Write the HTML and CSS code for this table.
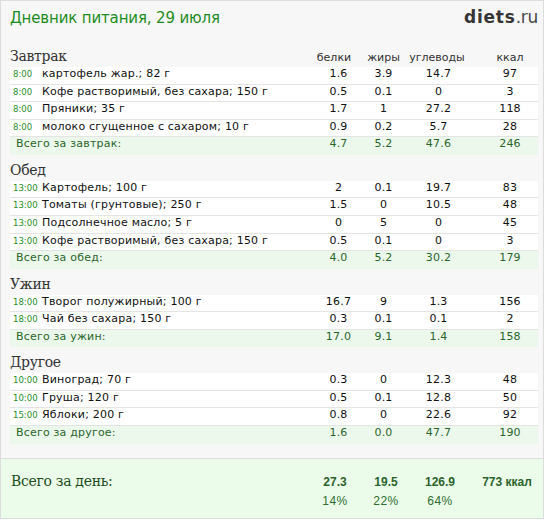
FILE: index.html
```html
<!DOCTYPE html>
<html lang="ru">
<head>
<meta charset="utf-8">
<title>Дневник питания</title>
<link rel="stylesheet" href="styles.css">
</head>
<body>
<div class="diary">
  <header class="diary-head">
    <h1 class="diary-title">Дневник питания, 29 июля</h1>
    <div class="logo"><span class="logo-name">diets</span><span class="logo-tld">.ru</span></div>
  </header>

  <section class="meal">
    <div class="meal-head">
      <h2 class="meal-name">Завтрак</h2>
      <span class="col-h col-b">белки</span>
      <span class="col-h col-z">жиры</span>
      <span class="col-h col-u">углеводы</span>
      <span class="col-h col-k">ккал</span>
    </div>
    <div class="row"><span class="name"><span class="time">8:00</span>картофель жар.; 82 г</span><span class="num">1.6</span><span class="num">3.9</span><span class="num">14.7</span><span class="num num-k">97</span></div>
    <div class="row"><span class="name"><span class="time">8:00</span>Кофе растворимый, без сахара; 150 г</span><span class="num">0.5</span><span class="num">0.1</span><span class="num">0</span><span class="num num-k">3</span></div>
    <div class="row"><span class="name"><span class="time">8:00</span>Пряники; 35 г</span><span class="num">1.7</span><span class="num">1</span><span class="num">27.2</span><span class="num num-k">118</span></div>
    <div class="row"><span class="name"><span class="time">8:00</span>молоко сгущенное с сахаром; 10 г</span><span class="num">0.9</span><span class="num">0.2</span><span class="num">5.7</span><span class="num num-k">28</span></div>
    <div class="row total"><span class="name">Всего за завтрак:</span><span class="num">4.7</span><span class="num">5.2</span><span class="num">47.6</span><span class="num num-k">246</span></div>
  </section>

  <section class="meal">
    <div class="meal-head"><h2 class="meal-name">Обед</h2></div>
    <div class="row"><span class="name"><span class="time">13:00</span>Картофель; 100 г</span><span class="num">2</span><span class="num">0.1</span><span class="num">19.7</span><span class="num num-k">83</span></div>
    <div class="row"><span class="name"><span class="time">13:00</span>Томаты (грунтовые); 250 г</span><span class="num">1.5</span><span class="num">0</span><span class="num">10.5</span><span class="num num-k">48</span></div>
    <div class="row"><span class="name"><span class="time">13:00</span>Подсолнечное масло; 5 г</span><span class="num">0</span><span class="num">5</span><span class="num">0</span><span class="num num-k">45</span></div>
    <div class="row"><span class="name"><span class="time">13:00</span>Кофе растворимый, без сахара; 150 г</span><span class="num">0.5</span><span class="num">0.1</span><span class="num">0</span><span class="num num-k">3</span></div>
    <div class="row total"><span class="name">Всего за обед:</span><span class="num">4.0</span><span class="num">5.2</span><span class="num">30.2</span><span class="num num-k">179</span></div>
  </section>

  <section class="meal">
    <div class="meal-head"><h2 class="meal-name">Ужин</h2></div>
    <div class="row"><span class="name"><span class="time">18:00</span>Творог полужирный; 100 г</span><span class="num">16.7</span><span class="num">9</span><span class="num">1.3</span><span class="num num-k">156</span></div>
    <div class="row"><span class="name"><span class="time">18:00</span>Чай без сахара; 150 г</span><span class="num">0.3</span><span class="num">0.1</span><span class="num">0.1</span><span class="num num-k">2</span></div>
    <div class="row total"><span class="name">Всего за ужин:</span><span class="num">17.0</span><span class="num">9.1</span><span class="num">1.4</span><span class="num num-k">158</span></div>
  </section>

  <section class="meal">
    <div class="meal-head"><h2 class="meal-name">Другое</h2></div>
    <div class="row"><span class="name"><span class="time">10:00</span>Виноград; 70 г</span><span class="num">0.3</span><span class="num">0</span><span class="num">12.3</span><span class="num num-k">48</span></div>
    <div class="row"><span class="name"><span class="time">10:00</span>Груша; 120 г</span><span class="num">0.5</span><span class="num">0.1</span><span class="num">12.8</span><span class="num num-k">50</span></div>
    <div class="row"><span class="name"><span class="time">15:00</span>Яблоки; 200 г</span><span class="num">0.8</span><span class="num">0</span><span class="num">22.6</span><span class="num num-k">92</span></div>
    <div class="row total"><span class="name">Всего за другое:</span><span class="num">1.6</span><span class="num">0.0</span><span class="num">47.7</span><span class="num num-k">190</span></div>
  </section>

  <div class="day">
    <span class="day-label">Всего за день:</span>
    <span class="day-val day-b">27.3</span>
    <span class="day-val day-z">19.5</span>
    <span class="day-val day-u">126.9</span>
    <span class="day-val day-k">773 ккал</span>
    <span class="day-pct day-b">14%</span>
    <span class="day-pct day-z">22%</span>
    <span class="day-pct day-u">64%</span>
  </div>
</div>
</body>
</html>
```

FILE: styles.css
```css
html, body {
  margin: 0;
  padding: 0;
  background: #ffffff;
}

.diary {
  box-sizing: border-box;
  width: 544px;
  height: 519px;
  border: 1px solid #dcdcdc;
  background: #f7f7f7;
  display: flex;
  flex-direction: column;
  font-family: "DejaVu Sans", Verdana, sans-serif;
  font-size: 11px;
  color: #111;
}

.diary-head {
  box-sizing: border-box;
  height: 40px;
  flex: none;
  padding: 7px 5px 0 9px;
  display: flex;
  justify-content: space-between;
  align-items: baseline;
}

.diary-title {
  margin: 0;
  font-family: "DejaVu Sans", Verdana, sans-serif;
  font-weight: normal;
  font-size: 15px;
  line-height: 18px;
  letter-spacing: -0.15px;
  color: #1e8c1e;
}

.logo {
  font-family: "DejaVu Sans", sans-serif;
  font-size: 17px;
  line-height: 18px;
  color: #353535;
}

.logo-name {
  font-weight: bold;
  letter-spacing: 0.8px;
}

.logo-tld {
  font-weight: normal;
  color: #4a4a4a;
  letter-spacing: -0.3px;
}

.meal {
  padding: 0 5px 0 9px;
}

.meal-head,
.row {
  display: grid;
  grid-template-columns: 305px 47px 43px 67px 65px;
}

.meal-head {
  box-sizing: border-box;
  height: 26px;
  padding: 7px 0 2px;
  align-items: baseline;
}

.meal-name {
  margin: 0;
  font-family: "DejaVu Serif", Georgia, serif;
  font-weight: normal;
  font-size: 14px;
  line-height: 17px;
  letter-spacing: -0.3px;
  color: #333;
}

.col-h {
  text-align: center;
  color: #333;
  line-height: 17px;
}

.col-b { padding-right: 9px; }
.col-u { padding-right: 3px; }
.col-k { padding-left: 11px; }

.row {
  line-height: 14.56px;
  padding-bottom: 2px;
  background: #ffffff;
  border-bottom: 1px solid #e4e4e4;
  letter-spacing: 0.2px;
}

.name {
  white-space: nowrap;
}

.time {
  display: inline-block;
  box-sizing: border-box;
  width: 32px;
  padding-left: 3px;
  font-family: "DejaVu Sans Condensed", "DejaVu Sans", sans-serif;
  font-stretch: condensed;
  font-size: 9.5px;
  letter-spacing: 0;
  color: #1f8f1f;
}

.num {
  text-align: center;
}

.num-k {
  padding-left: 11px;
}

.row.total {
  background: #edf8ed;
  border-bottom: none;
  padding-bottom: 3px;
  color: #2a662a;
}

.row.total .name {
  padding-left: 6px;
}

.day {
  box-sizing: border-box;
  height: 60px;
  flex: none;
  margin-top: auto;
  border-top: 1px solid #dcdcdc;
  background: #ebfceb;
  padding: 13px 5px 0 9px;
  display: grid;
  grid-template-columns: 305px 47px 43px 67px 65px;
  grid-template-rows: 18px 18px;
  row-gap: 2px;
  align-items: baseline;
}

.day-label {
  grid-row: 1;
  grid-column: 1;
  padding-left: 1px;
  font-family: "DejaVu Serif", Georgia, serif;
  font-size: 14px;
  line-height: 18px;
  letter-spacing: -0.3px;
  color: #1c4f1c;
}

.day-val,
.day-pct {
  font-family: "Liberation Sans", Arial, sans-serif;
  text-align: center;
  line-height: 18px;
}

.day-val {
  grid-row: 1;
  font-size: 12px;
  font-weight: bold;
  color: #2b652b;
}

.day-pct {
  grid-row: 2;
  font-size: 12px;
  letter-spacing: 0.5px;
  color: #2e6e2e;
}

.day-b { grid-column: 2; padding-right: 7px; }
.day-z { grid-column: 3; padding-left: 5px; }
.day-u { grid-column: 4; padding-left: 3px; }
.day-k { grid-column: 5; padding-left: 5px; }
```
